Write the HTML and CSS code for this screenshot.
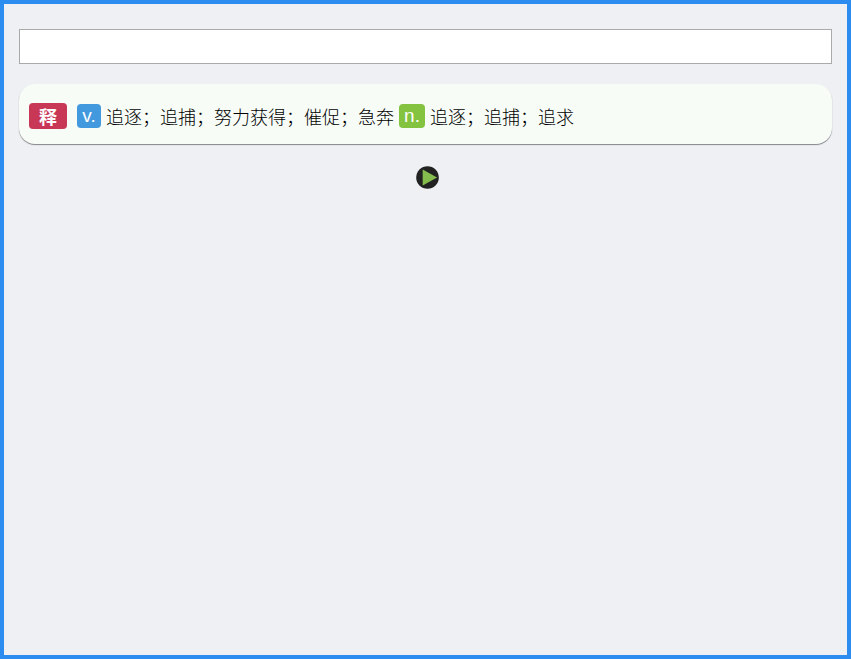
FILE: index.html
```html
<!DOCTYPE html>
<html lang="en">
<head>
    <meta charset="UTF-8" />
    <meta name="viewport" content="width=device-width, initial-scale=1.0" />
    <title>Dictionary</title>
    <link rel="stylesheet" href="styles.css">
</head>
<body>
    <div class="main">
        <input type="text" class="search" />
        <div class="result">
            <span class="tag-shi">释</span>
            <span class="pos pos-v">v.</span>
            <span class="meaning">追逐；追捕；努力获得；催促；急奔</span>
            <span class="pos pos-n">n.</span>
            <span class="meaning">追逐；追捕；追求</span>
        </div>
        <div class="audio">
            <svg class="play" width="23" height="23" viewBox="0 0 24 24">
                <circle cx="12" cy="12" r="11.8" fill="#222222" />
                <path d="M7 3.6 L22 12 L7 20.4 Z" fill="#84bd4e" />
            </svg>
        </div>
    </div>
</body>
</html>
```

FILE: styles.css
```css
html, body {
    height: 100%;
}

body {
    margin: 0;
    font-family: "Liberation Sans", "Noto Sans CJK SC", sans-serif;
    background-color: #eef0f4;
}

.main {
    box-sizing: border-box;
    height: 100%;
    border: 4px solid #2d8cf0;
    padding: 25px 15px;
}

.search {
    display: block;
    box-sizing: border-box;
    width: 100%;
    height: 35px;
    margin: 0;
    padding: 0 8px;
    border: 1px solid #aaa;
    background-color: #fff;
}

.result {
    display: flex;
    align-items: center;
    box-sizing: border-box;
    height: 60px;
    margin-top: 20px;
    padding: 4px 10px 0;
    border-radius: 16px;
    background-color: #f7fcf7;
    box-shadow: 0 1px 1px rgba(0, 0, 0, 0.45);
    font-size: 18px;
    color: #000;
}

.tag-shi {
    width: 38px;
    height: 26px;
    margin-right: 10px;
    margin-top: -1px;
    border-radius: 4px;
    background-color: #c93756;
    color: #fff;
    font-family: "Noto Sans CJK SC", sans-serif;
    font-size: 18px;
    font-weight: bold;
    line-height: 26px;
    text-align: center;
}

.pos {
    height: 24px;
    border-radius: 4px;
    color: #fff;
    font-size: 19px;
    line-height: 24px;
    text-align: center;
}

.pos-v {
    width: 24px;
    background-color: #4299dd;
}

.pos-n {
    width: 26px;
    margin-left: 5px;
    background-color: #84c33f;
}

.meaning {
    margin-left: 5px;
    font-family: "Noto Sans CJK SC", sans-serif;
    font-weight: 300;
    line-height: 24px;
    white-space: nowrap;
}

.audio {
    display: flex;
    justify-content: center;
    margin-top: 22px;
    padding-left: 4px;
}

.play {
    display: block;
}
```
